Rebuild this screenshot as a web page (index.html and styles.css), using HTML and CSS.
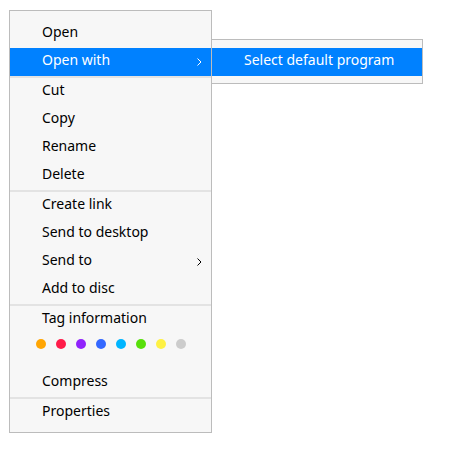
FILE: index.html
```html
<!DOCTYPE html>
<html>
<head>
<meta charset="utf-8">
<link rel="stylesheet" href="styles.css">
</head>
<body>
<div class="stage">
  <div class="menu main">
    <div class="item">Open</div>
    <div class="item active">Open with<svg class="chev" width="5" height="8" viewBox="0 0 5 8"><polyline points="0.5,0.5 4,4 0.5,7.5" fill="none" stroke="currentColor" stroke-width="1"/></svg></div>
    <div class="sep"></div>
    <div class="item">Cut</div>
    <div class="item">Copy</div>
    <div class="item">Rename</div>
    <div class="item">Delete</div>
    <div class="sep"></div>
    <div class="item">Create link</div>
    <div class="item">Send to desktop</div>
    <div class="item">Send to<svg class="chev" width="5" height="8" viewBox="0 0 5 8"><polyline points="0.5,0.5 4,4 0.5,7.5" fill="none" stroke="currentColor" stroke-width="1"/></svg></div>
    <div class="item">Add to disc</div>
    <div class="sep"></div>
    <div class="item">Tag information</div>
    <div class="tags">
      <span class="dot orange"></span>
      <span class="dot red"></span>
      <span class="dot purple"></span>
      <span class="dot blue"></span>
      <span class="dot cyan"></span>
      <span class="dot green"></span>
      <span class="dot yellow"></span>
      <span class="dot gray"></span>
    </div>
    <div class="item">Compress</div>
    <div class="sep"></div>
    <div class="item">Properties</div>
  </div>
  <div class="menu sub">
    <div class="item active">Select default program</div>
  </div>
</div>
</body>
</html>
```

FILE: styles.css
```css
html, body {
  margin: 0;
  padding: 0;
  background: #ffffff;
}
.stage {
  display: flex;
  align-items: flex-start;
  padding: 10px 0 0 9px;
  font-family: "Noto Sans", "DejaVu Sans", sans-serif;
  font-size: 14px;
  color: #000000;
}
.menu {
  background: #f7f7f7;
  border: 1px solid #bcbcbc;
  box-sizing: border-box;
}
.main {
  width: 203px;
  padding: 9px 0 5px 0;
}
.sub {
  width: 212px;
  margin-left: -1px;
  margin-top: 29px;
  padding: 8px 0 7px 0;
}
.item {
  height: 28px;
  box-sizing: border-box;
  line-height: 24px;
  padding: 0 9px 4px 32px;
  display: flex;
  align-items: center;
  justify-content: space-between;
  white-space: nowrap;
}
.item.active {
  background: #0081ff;
  color: #ffffff;
}
.chev {
  display: block;
  margin-top: 3px;
}
.sep {
  height: 2px;
  background: #e3e3e3;
}
.tags {
  height: 35px;
  box-sizing: border-box;
  padding: 5px 0 0 26px;
  display: flex;
  gap: 10px;
}
.dot {
  width: 10px;
  height: 10px;
  border-radius: 50%;
  display: block;
}
.orange { background: #ffa503; }
.red { background: #ff1c49; }
.purple { background: #9023fc; }
.blue { background: #3468ff; }
.cyan { background: #00b5ff; }
.green { background: #58df0a; }
.yellow { background: #fef144; }
.gray { background: #cccccc; }
```
